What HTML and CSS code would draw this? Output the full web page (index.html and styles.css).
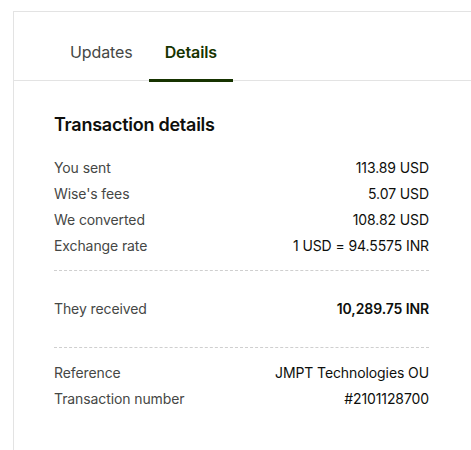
FILE: index.html
```html
<!DOCTYPE html>
<html lang="en">
<head>
    <meta charset="UTF-8">
    <meta name="viewport" content="width=device-width, initial-scale=1.0">
    <title>Transaction details</title>
    <link rel="stylesheet" href="styles.css">
</head>
<body>
    <div class="panel">
        <div class="tabs">
            <div class="tab">Updates</div>
            <div class="tab active">Details</div>
        </div>

        <div class="details">
            <h2>Transaction details</h2>

            <div class="group">
                <div class="row"><span class="label">You sent</span><span class="value">113.89 USD</span></div>
                <div class="row"><span class="label">Wise's fees</span><span class="value">5.07 USD</span></div>
                <div class="row"><span class="label">We converted</span><span class="value">108.82 USD</span></div>
                <div class="row"><span class="label">Exchange rate</span><span class="value">1 USD = 94.5575 INR</span></div>
            </div>

            <div class="group spaced">
                <div class="row"><span class="label">They received</span><span class="value strong">10,289.75 INR</span></div>
            </div>

            <div class="group">
                <div class="row"><span class="label">Reference</span><span class="value">JMPT Technologies OU</span></div>
                <div class="row"><span class="label">Transaction number</span><span class="value">#2101128700</span></div>
            </div>
        </div>
    </div>
</body>
</html>
```

FILE: styles.css
```css
body {
    margin: 0;
    font-family: Inter, "Noto Sans", sans-serif;
    background: #fff;
    color: #0e0f0c;
}
.panel {
    margin: 11px 0 0 13px;
    border-left: 1px solid #e3e3e3;
    border-top: 1px solid #e3e3e3;
    min-height: 460px;
}
.tabs {
    display: flex;
    padding: 0 0 0 40px;
    margin-top: 26px;
    border-bottom: 1px solid #e3e3e3;
}
.tab {
    padding: 4px 16px 18px;
    font-size: 16px;
    letter-spacing: -0.1px;
    color: #454745;
    position: relative;
}
.tab.active {
    font-weight: 600;
    color: #163300;
}
.tab.active::after {
    content: "";
    position: absolute;
    left: 0;
    right: 0;
    bottom: -2px;
    height: 3px;
    background: #163300;
}
.details {
    padding: 32px 42px 0 40px;
}
h2 {
    margin: 0 0 18px;
    font-size: 18px;
    font-weight: 600;
    letter-spacing: -0.25px;
    line-height: 24px;
}
.group {
    padding: 0 0 11px;
}
.group + .group {
    border-top: 1px dashed #cfcfcf;
    padding-top: 12px;
}
.group.spaced {
    padding: 25px 0 25px;
}
.row {
    display: flex;
    justify-content: space-between;
    font-size: 14px;
    letter-spacing: -0.1px;
    line-height: 26px;
}
.label {
    color: #454745;
}
.value.strong {
    font-weight: 600;
}
```
